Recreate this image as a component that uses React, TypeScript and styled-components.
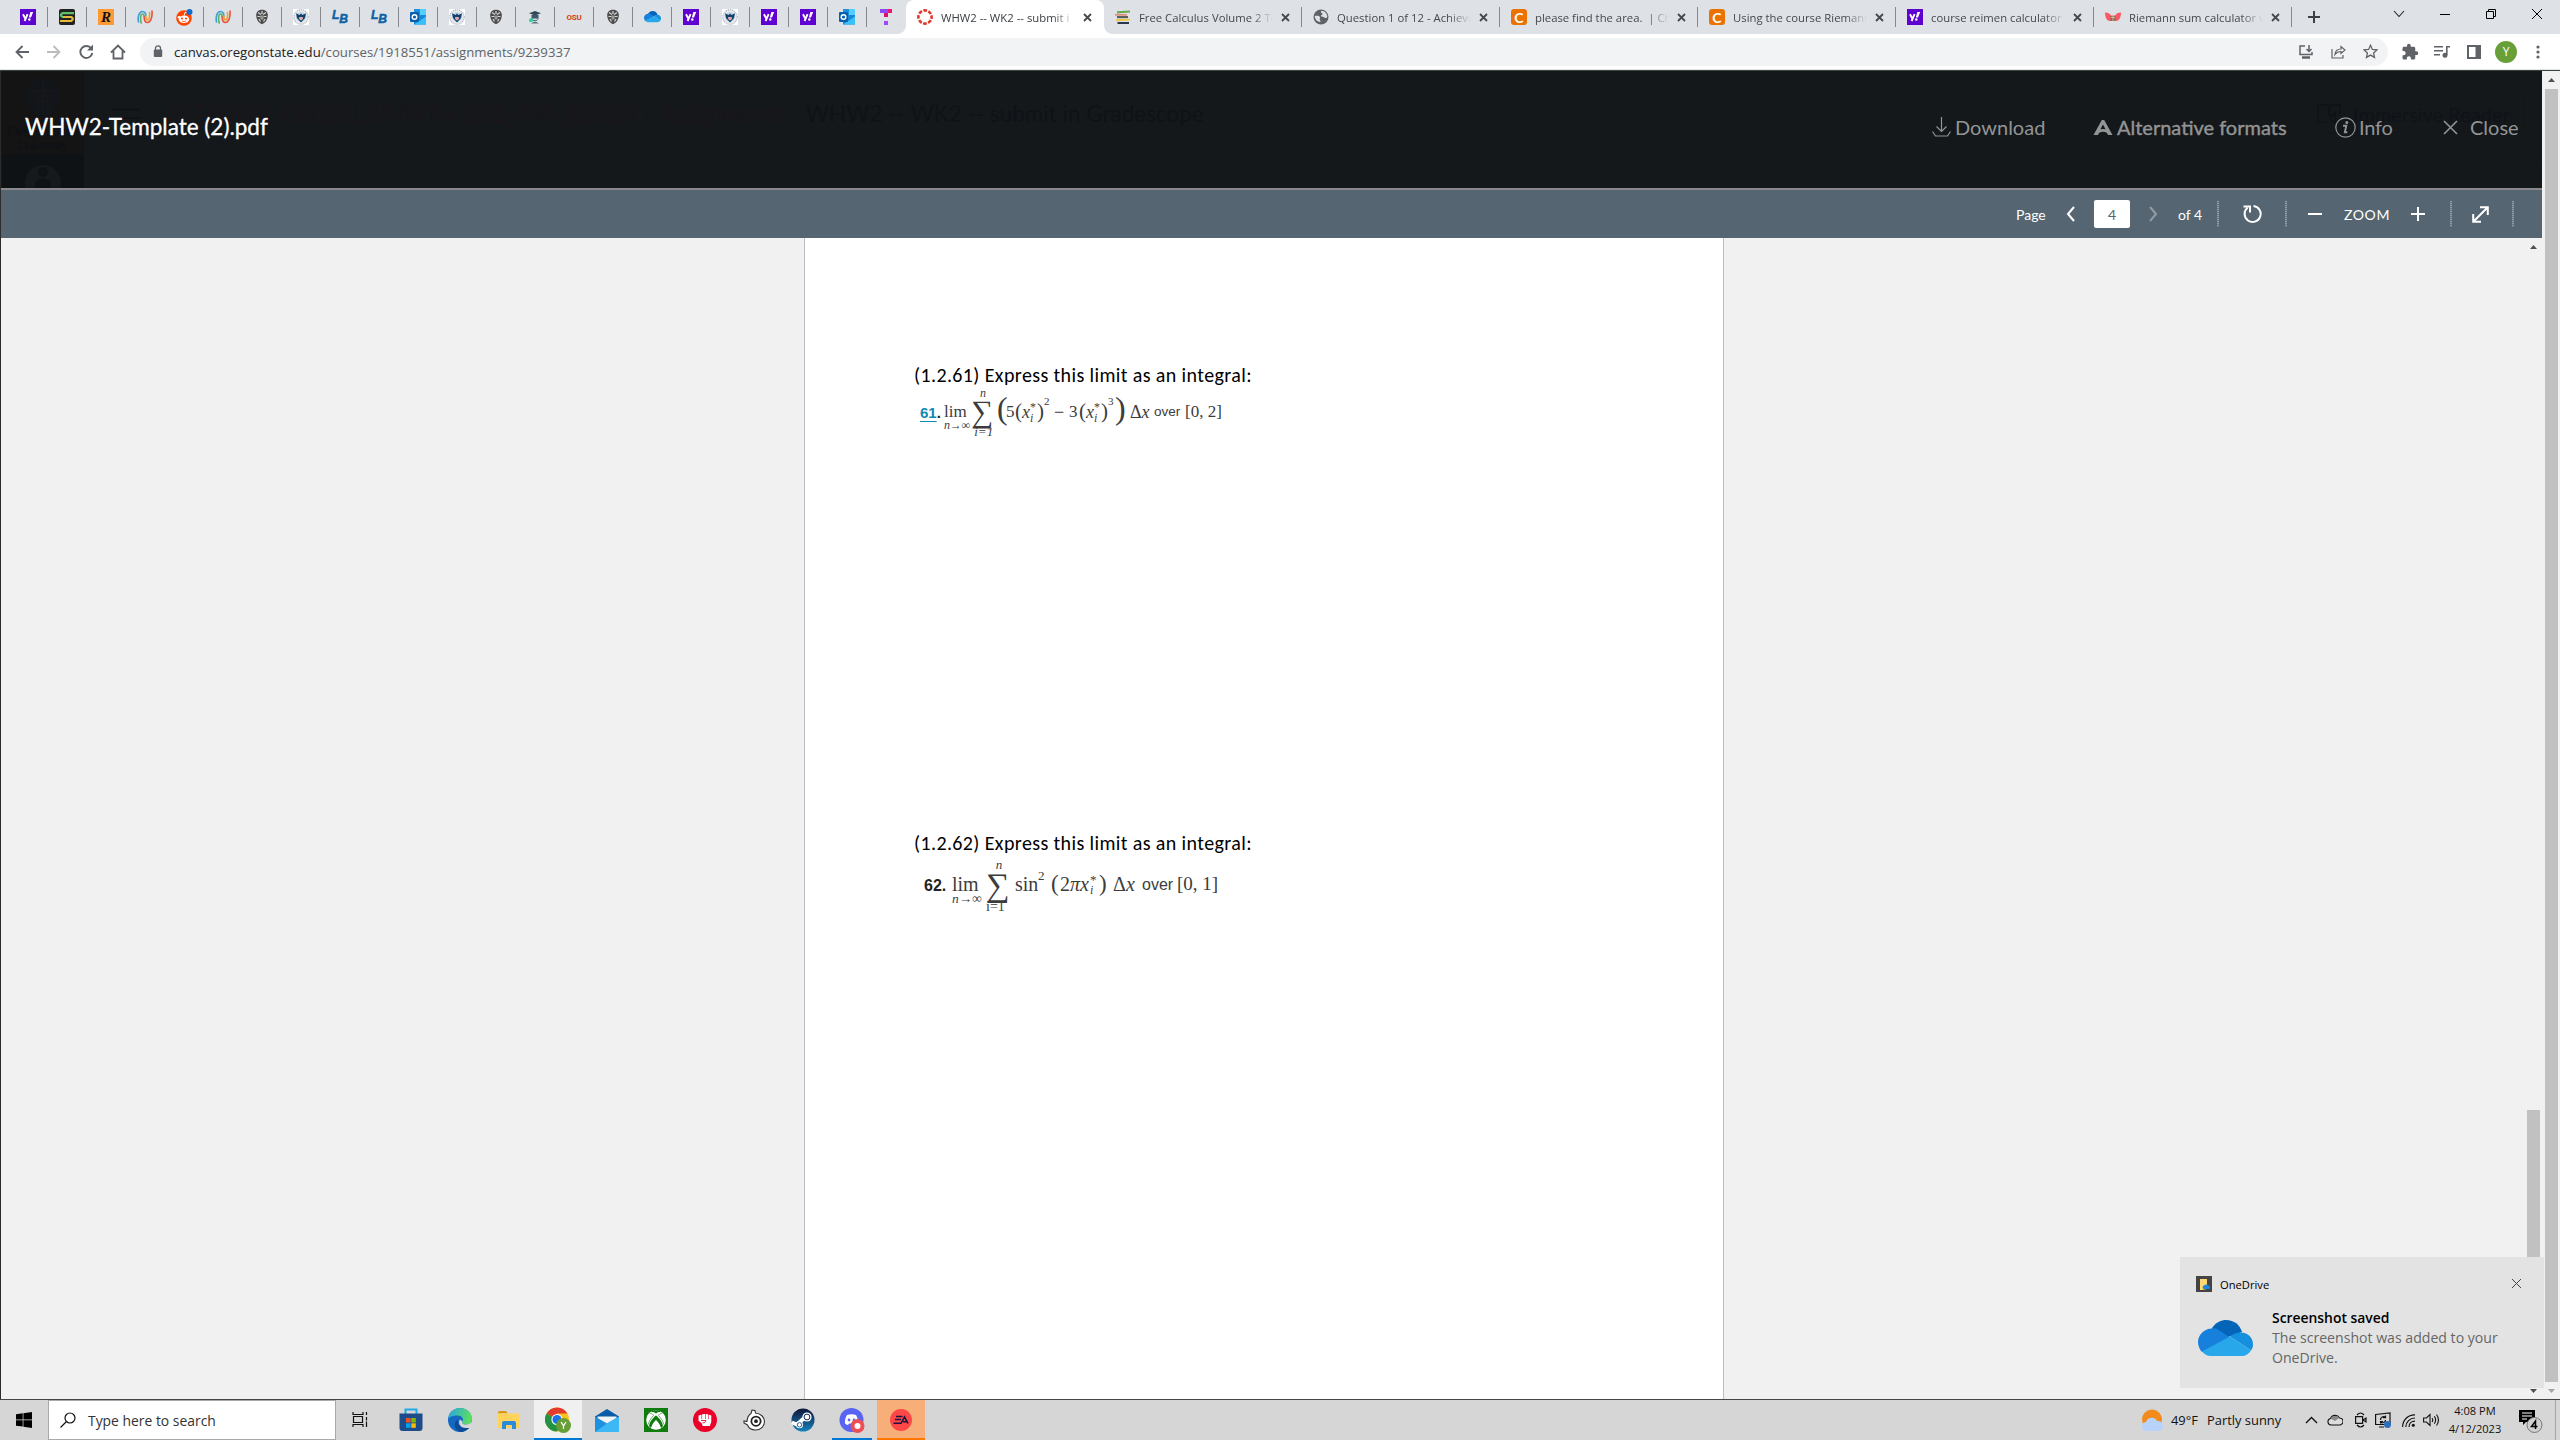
import React from "react";
import styled, { createGlobalStyle, css } from "styled-components";

const UI = `"Segoe UI", "Open Sans", "Noto Sans", sans-serif`;
const LATO = `Lato, "Open Sans", sans-serif`;
const SERIF = `"Liberation Serif", "Times New Roman", serif`;
const SANS = `"Liberation Sans", Arial, sans-serif`;

const Global = createGlobalStyle`
  * { box-sizing: border-box; }
  html, body { margin: 0; padding: 0; overflow: hidden; }
  svg { display: block; flex: none; }
`;

const Screen = styled.div`
  width: 2560px;
  height: 1440px;
  display: flex;
  flex-direction: column;
  background: #f1f1f1;
  font-family: ${UI};
  overflow: hidden;
  position: relative;
`;

const T = styled.span<{ $ls?: number }>`
  white-space: pre;
  letter-spacing: ${(p) => p.$ls ?? 0}px;
  font-variant-ligatures: ${(p) => (p.$ls ? "none" : "normal")};
`;

/* ---------- tab strip ---------- */
const TabStrip = styled.div`
  height: 34px;
  flex: none;
  display: flex;
  background: #dee1e6;
  padding-left: 9px;
`;
const Pinned = styled.div<{ $last?: boolean }>`
  width: 39px;
  height: 20px;
  margin-top: 7px;
  display: flex;
  align-items: center;
  justify-content: center;
  border-right: 1px solid ${(p) => (p.$last ? "transparent" : "#85888d")};
`;
const Tab = styled.div<{ $active?: boolean; $sep?: boolean }>`
  width: 198px;
  height: 34px;
  display: flex;
  align-items: center;
  padding-left: 11px;
  font-size: 11.3px;
  color: #45494d;
  position: relative;
  ${(p) =>
    p.$active &&
    css`
      background: #fff;
      border-radius: 8px 8px 0 0;
      color: #3c4043;
      &::before,
      &::after {
        content: "";
        position: absolute;
        bottom: 0;
        width: 8px;
        height: 8px;
      }
      &::before {
        left: -8px;
        background: radial-gradient(circle at 0 0, transparent 7.5px, #fff 8px);
      }
      &::after {
        right: -8px;
        background: radial-gradient(circle at 100% 0, transparent 7.5px, #fff 8px);
      }
    `}
  ${(p) =>
    p.$sep &&
    css`
      background: linear-gradient(#85888d, #85888d) right 7px / 1px 20px no-repeat;
    `}
`;
const TabTitle = styled.span`
  width: 134px;
  margin-left: 8px;
  overflow: hidden;
  mask-image: linear-gradient(90deg, #000 112px, transparent 134px);
`;
const TabClose = styled.span`
  margin-left: 8px;
`;
const Controls = styled.div`
  display: flex;
  flex: 1;
  justify-content: flex-end;
`;
const NewTab = styled.div`
  width: 43px;
  display: flex;
  align-items: center;
  justify-content: center;
`;
const WinBtn = styled.div`
  width: 46px;
  height: 28px;
  display: flex;
  align-items: center;
  justify-content: center;
`;

/* ---------- address bar ---------- */
const Toolbar = styled.div`
  height: 36px;
  flex: none;
  display: flex;
  align-items: center;
  background: #fff;
  padding: 0 6px;
  border-bottom: 1px solid #e4e6e4;
`;
const Slot = styled.div`
  width: 32px;
  height: 32px;
  display: flex;
  align-items: center;
  justify-content: center;
`;
const Omnibox = styled.div`
  flex: 1;
  height: 28px;
  margin: 0 6px;
  border-radius: 14px;
  background: #f1f3f4;
  display: flex;
  align-items: center;
  padding: 0 2px 0 13px;
`;
const Url = styled.div`
  flex: 1;
  margin-left: 11px;
  font-size: 13.2px;
  color: #5f6368;
  b {
    font-weight: 400;
    color: #202124;
  }
`;
const Avatar = styled.div`
  width: 22px;
  height: 22px;
  border-radius: 50%;
  background: #689f38;
  color: #fff;
  font-size: 12px;
  display: flex;
  align-items: center;
  justify-content: center;
`;

/* ---------- web page ---------- */
const WebView = styled.div`
  flex: 1;
  min-height: 0;
  display: flex;
  border-bottom: 1px solid #454545;
  border-top: 1px solid #3c4240;
`;
const Viewer = styled.div`
  flex: 1;
  min-width: 0;
  display: flex;
  flex-direction: column;
  border-left: 1px solid #2b2b2b;
`;
const PreviewHeader = styled.div`
  height: 117px;
  flex: none;
  position: relative;
  display: flex;
  align-items: center;
  justify-content: space-between;
  padding: 0 0 0 24px;
  background: #14181b;
  font-family: ${LATO};
  overflow: hidden;
`;
const Underlay = styled.div`
  position: absolute;
  inset: 0;
  display: flex;
  color: #191518;
`;
const GlobalNav = styled.div`
  width: 83px;
  height: 117px;
  background: linear-gradient(#151415 83px, #0f1215 83px);
  border-left: 1px solid #2a1208;
  overflow: hidden;
`;
const Breadcrumbs = styled.div`
  flex: 1;
  height: 91px;
  margin-left: 27px;
  display: flex;
  align-items: center;
  font-size: 22.5px;
  padding-bottom: 5px;
  border-bottom: 1px solid #161a1d;
`;
const Crumb = styled(T)<{ $ml: number; $current?: boolean }>`
  margin-left: ${(p) => p.$ml}px;
  color: ${(p) => (p.$current ? "#0f1216" : "inherit")};
`;
const Immersive = styled.div`
  width: 222px;
  height: 38px;
  margin: 0 18px 0 auto;
  border: 1px solid #12161a;
  display: flex;
  align-items: center;
  gap: 12px;
  padding-left: 14px;
  font-size: 20px;
  color: #0f1318;
`;
const DocTitle = styled.div`
  position: relative;
  font-size: 22.5px;
  color: #fff;
  -webkit-text-stroke: 0.3px #fff;
  margin-top: -7px;
`;
const Actions = styled.div`
  position: relative;
  display: flex;
  margin-top: -5px;
`;
const Action = styled.div<{ $w: number; $gap: number; $bold?: boolean }>`
  width: ${(p) => p.$w}px;
  display: flex;
  align-items: center;
  gap: ${(p) => p.$gap}px;
  font-size: 20px;
  color: #929495;
  -webkit-text-stroke: ${(p) => (p.$bold ? 0.4 : 0)}px #929495;
`;

const DocBar = styled.div`
  height: 50px;
  flex: none;
  display: flex;
  align-items: center;
  justify-content: flex-end;
  padding: 0 28px 0 0;
  background: #556572;
  border-top: 2px solid #8b898b;
  font-family: ${LATO};
  font-size: 14px;
  color: #fff;
`;
const Cell = styled.div<{ $w: number; $left?: number }>`
  width: ${(p) => p.$w}px;
  display: flex;
  align-items: center;
  justify-content: ${(p) => (p.$left !== undefined ? "flex-start" : "center")};
  padding-left: ${(p) => p.$left ?? 0}px;
`;
const Dots = styled.div`
  width: 2px;
  height: 26px;
  background: repeating-linear-gradient(#8f9aa3 0 1px, #6b7984 1px 2px);
`;
const PageInput = styled.div`
  width: 36px;
  height: 28px;
  border-radius: 2px;
  background: #fff;
  color: #556572;
  display: flex;
  align-items: center;
  justify-content: center;
`;

const DocArea = styled.div`
  flex: 1;
  min-height: 0;
  display: flex;
  background: #f1f1f1;
`;
const Paper = styled.div`
  width: 920px;
  margin-left: 803px;
  background: #fff;
  border: solid #b9bfc4;
  border-width: 0 1px;
  display: flex;
  flex-direction: column;
  padding: 120px 0 0 109px;
`;
const Question = styled.div<{ $h: number }>`
  height: ${(p) => p.$h}px;
  flex: none;
  display: flex;
  flex-direction: column;
`;
const Prompt = styled.div`
  font-family: Carlito, ${LATO};
  font-size: 20px;
  line-height: 34px;
  height: 34px;
  color: #000;
`;
const Formula = styled.div<{ $ml: number }>`
  display: flex;
  align-items: flex-start;
  margin-left: ${(p) => p.$ml}px;
  font-family: ${SERIF};
  color: #3c3c3c;
`;
const Tok = styled.span<{ $w: number; $top: number; $s: number; $i?: boolean; $ls?: number; $lh?: number }>`
  flex: none;
  width: ${(p) => p.$w}px;
  margin-top: ${(p) => p.$top}px;
  font-size: ${(p) => p.$s}px;
  line-height: ${(p) => p.$lh ?? p.$s}px;
  white-space: pre;
  font-style: ${(p) => (p.$i ? "italic" : "normal")};
  letter-spacing: ${(p) => p.$ls ?? 0}px;
`;
const Num = styled(Tok)`
  font-family: ${SANS};
  color: #222;
  font-weight: 700;
  u {
    color: #0f8ab4;
    text-underline-offset: 3px;
  }
`;
const Word = styled(Tok)`
  font-family: ${SANS};
`;
const Stack = styled.span<{ $w: number; $top: number }>`
  flex: none;
  width: ${(p) => p.$w}px;
  margin-top: ${(p) => p.$top}px;
  display: flex;
  flex-direction: column;
`;

/* ---------- scrollbars ---------- */
const Scroll = styled.div<{ $w: number }>`
  width: ${(p) => p.$w}px;
  flex: none;
  margin-left: auto;
  display: flex;
  flex-direction: column;
  align-items: center;
  background: #f1f1f1;
`;
const Arrow = styled.div<{ $h: number }>`
  height: ${(p) => p.$h}px;
  display: flex;
  align-items: center;
`;
const Thumb = styled.div<{ $mt?: number }>`
  width: 13px;
  flex: 1;
  margin-top: ${(p) => p.$mt ?? 0}px;
  background: #c1c1c1;
`;

/* ---------- toast ---------- */
const Toast = styled.div`
  position: absolute;
  left: 2180px;
  top: 1257px;
  width: 364px;
  height: 131px;
  background: #e3e3e3;
  padding: 19px 16px 0;
`;
const ToastHead = styled.div`
  display: flex;
  align-items: center;
  height: 16px;
  gap: 8px;
  font-size: 11.2px;
  color: #000;
  svg:last-child {
    margin: -2px 7px 0 auto;
  }
`;
const ToastBody = styled.div`
  display: flex;
  padding: 16px 0 0 2px;
  gap: 19px;
`;
const ToastArt = styled.div`
  padding-top: 12px;
`;
const ToastText = styled.div`
  display: flex;
  flex-direction: column;
  font-size: 14.1px;
  line-height: 20px;
  color: #666;
  strong {
    color: #000;
    font-weight: 600;
    font-size: 13.9px;
  }
`;

/* ---------- taskbar ---------- */
const Taskbar = styled.div`
  height: 40px;
  flex: none;
  display: flex;
  background: #d6d6d6;
  color: #111;
`;
const Start = styled.div`
  width: 48px;
  display: flex;
  align-items: center;
  justify-content: center;
`;
const Search = styled.div`
  width: 288px;
  background: #fff;
  border: 1px solid #a9a9a9;
  display: flex;
  align-items: center;
  padding: 0 0 0 11px;
  gap: 11px;
  font-size: 13.9px;
  color: #333;
`;
const TaskView = styled.div`
  width: 51px;
  display: flex;
  align-items: center;
  padding: 0 0 2px 16px;
`;
const Tile = styled.div<{ $bg?: string; $line?: string; $lineW?: number }>`
  width: 48px;
  margin-right: 1px;
  display: flex;
  align-items: center;
  justify-content: center;
  background: ${(p) =>
    p.$line
      ? `linear-gradient(${p.$line}, ${p.$line}) center bottom / ${p.$lineW ?? 48}px 2px no-repeat ${p.$bg ?? "transparent"}`
      : p.$bg ?? "transparent"};
`;
const Tray = styled.div`
  margin-left: auto;
  display: flex;
  align-items: center;
  font-size: 12.9px;
`;
const TrayCell = styled.div<{ $w: number; $left?: number }>`
  width: ${(p) => p.$w}px;
  padding-left: ${(p) => p.$left ?? 0}px;
  display: flex;
  align-items: center;
`;
const Clock = styled.div`
  width: 72px;
  display: flex;
  flex-direction: column;
  align-items: center;
  font-size: 11.1px;
  line-height: 18px;
  margin-left: -10px;
`;
const ShowDesktop = styled.div`
  width: 5px;
  height: 40px;
  border-left: 1px solid #a5a5a5;
`;

/* ---------- favicons ---------- */
const Yahoo = () => (
  <svg width="16" height="16" viewBox="0 0 16 16">
    <rect width="16" height="16" fill="#5f01d1" />
    <path d="M3 5.2l2.4 4.6M7.6 5.2L4.6 12" stroke="#fff" strokeWidth="1.9" fill="none" />
    <path d="M10.4 3h2.8l-2.2 5.6H8.8z" fill="#fff" />
    <circle cx="9.3" cy="10.5" r="1.25" fill="#fff" />
  </svg>
);
const SIcon = () => (
  <svg width="16" height="16" viewBox="0 0 16 16">
    <rect width="16" height="16" rx="2" fill="#222" />
    <path d="M15 4.2H3.5L2 5.5v1.2L3.5 8H12" stroke="#5cc36a" strokeWidth="2.2" fill="none" />
    <path d="M4 8h8.5L13.6 9.2v1.4L12.2 12H1" stroke="#e5b93a" strokeWidth="2.2" fill="none" />
  </svg>
);
const Letter = styled.span<{ $c: string; $bg?: string; $s: number; $f?: string; $i?: boolean; $r?: number; $ls?: number }>`
  width: 16px;
  height: 16px;
  flex: none;
  display: flex;
  align-items: center;
  justify-content: center;
  color: ${(p) => p.$c};
  background: ${(p) => p.$bg ?? "transparent"};
  font: ${(p) => (p.$i ? "italic" : "normal")} 700 ${(p) => p.$s}px ${(p) => p.$f ?? SANS};
  border-radius: ${(p) => p.$r ?? 0}px;
  letter-spacing: ${(p) => p.$ls ?? 0}px;
`;
const Swirl = () => (
  <svg width="16" height="16" viewBox="0 0 16 16" fill="none" strokeWidth="1.6" strokeLinecap="round">
    <path d="M1.500 13C.5 8 2 2.500 5.500 2.500 8 2.500 9 5 8.800 7" stroke="#3f9fd8" />
    <path d="M4.200 14C3 9.500 3.500 5 5.500 5c1.300 0 1.700 1.500 1.700 3" stroke="#58b368" />
    <path d="M7.200 8c0 3 1 5.500 3.300 5.500 3.500 0 5-6 4.500-11.500" stroke="#e8533f" />
    <path d="M8.800 7c0 2.500.7 4 1.900 4 1.500 0 2.300-4 1.800-7.500" stroke="#f0a030" />
  </svg>
);
const Reddit = () => (
  <svg width="17" height="17" viewBox="0 0 17 17">
    <circle cx="8" cy="9" r="7.8" fill="#ff4500" />
    <ellipse cx="8" cy="10.2" rx="5.2" ry="3.8" fill="#fff" />
    <circle cx="3" cy="8.200" r="1.300" fill="#fff" />
    <circle cx="6" cy="9.5" r="1.1" fill="#ff4500" />
    <circle cx="10" cy="9.500" r="1.1" fill="#ff4500" />
    <path d="M6 12q2 1.200 4 0" stroke="#ff4500" fill="none" strokeWidth=".8" />
    <path d="M8.200 6.500l.8-3.200 2.200.5" stroke="#fff" fill="none" strokeWidth=".9" />
    <circle cx="13.500" cy="3" r="3" fill="#0a6fd0" />
  </svg>
);
const Shield = () => (
  <svg width="16" height="16" viewBox="0 0 16 16">
    <path d="M8 .8c3 0 5.800 1.800 5.800 5.200 0 4-2 8-5.800 9.200C4.200 14 2.200 10 2.200 6 2.200 2.600 5 .8 8 .8z" fill="#4c4c4c" />
    <path d="M4 3.500l3 2M12 3.500l-3 2M3.500 7.500h3M9.500 7.500h3M5 10l1.500 2.500M11 10l-1.500 2.500M8 2v3" stroke="#d5d5d5" strokeWidth="1.200" />
    <path d="M6.500 6.500h3v4h-3z" fill="#999" />
  </svg>
);
const Seal = () => (
  <svg width="16" height="16" viewBox="0 0 16 16">
    <rect width="16" height="16" fill="#fff" />
    <circle cx="8" cy="8" r="7.200" fill="#e9ecef" stroke="#a9b0b8" strokeWidth="1.100" strokeDasharray="1.300 .8" />
    <circle cx="8" cy="8" r="5" fill="#c3d3df" />
    <path d="M3 4.200L6.500 6 8 4.500 9.500 6 13 4.200 12 9 8 13.500 4 9z" fill="#12426f" />
    <path d="M6.300 8h3.400v2L8 11.500 6.300 10z" fill="#fff" />
    <path d="M7 8v2.500M8 8v3M9 8v2.500" stroke="#c33" strokeWidth=".5" />
  </svg>
);
const OutlookIcon = () => (
  <svg width="16" height="16" viewBox="0 0 16 16">
    <rect x="4" y="0" width="12" height="12" fill="#1f8fe0" />
    <rect x="10" y="0" width="6" height="6" fill="#50d0ff" />
    <path d="M4 7l12-1v9.500H4z" fill="#1a86d8" />
    <path d="M4 15.500L16 7.500v8z" fill="#36c2f8" />
    <rect x="0" y="3" width="9" height="10" rx="1" fill="#0a5eb0" />
    <circle cx="4.500" cy="8" r="2.300" fill="none" stroke="#fff" strokeWidth="1.400" />
  </svg>
);
const Grad = () => (
  <svg width="16" height="16" viewBox="0 0 16 16">
    <path d="M8 2l6 2.200-6 2.300-6-2.300z" fill="#2f4858" />
    <path d="M4.500 6h7v3.500q-3.500 2-7 0z" fill="#3f5868" />
    <path d="M5 9.500c0 3 6 3 6 0" fill="#cbd5da" stroke="#506470" />
    <path d="M4 14.500q4-3.500 8 0z" fill="#5a6f7c" />
    <circle cx="4" cy="11.200" r="2" fill="#2fd1a0" />
  </svg>
);
const Cloud = ({ w }: { w: number }) => (
  <svg width={w} height={w * 0.66} viewBox="0 0 55 36.300">
    <path d="M13 10C17 2 24 0 28 0c8 0 14 5 16 12L30 17z" fill="#0364b8" />
    <path d="M14 8.500C6 8.500 0 15 0 22c0 4 2 8 4 10l29-14-14-9c-2-.6-3-.8-5-.5z" fill="#1780dc" />
    <path d="M43 12.500c-4-.3-7 1-11 4l21 14c1.500-2 2-4 2-6 0-7-5-12-12-12z" fill="#1490df" />
    <path d="M4 31.500L32 16.500l21 14c-2 3.500-5.500 5.500-9 5.500H13c-4 0-7-2-9-4.500z" fill="#28a8ea" />
  </svg>
);
const TIcon = () => (
  <svg width="12" height="16" viewBox="0 0 12 16">
    <path d="M0 0h12v4H8v4H4V4H0z" fill="#8a4af3" />
    <path d="M4 4h4v4H4z" fill="#e0106a" />
    <path d="M8 0h4v4H8z" fill="#f0146e" />
    <rect x="4" y="12" width="4" height="4" fill="#9a4bff" />
  </svg>
);
const CanvasIcon = () => (
  <svg width="16" height="16" viewBox="0 0 16 16">
    <circle cx="8" cy="8" r="6.600" fill="none" stroke="#e0392b" strokeWidth="2.600" strokeDasharray="3.700 1.480" strokeDashoffset="1.850" />
  </svg>
);
const Books = () => (
  <svg width="16" height="16" viewBox="0 0 16 16">
    <path d="M2 2.200l13-.8v2.200l-13 .8z" fill="#6aa84f" />
    <path d="M0 5.300h12v1.200H0z" fill="#e06a4a" />
    <path d="M2 7h11v2.200H2z" fill="#5c5f5a" />
    <path d="M1 10.200l14-.7v2l-14 .7z" fill="#ecc64d" />
    <path d="M2.500 13H14v2H2.500z" fill="#2c3550" />
  </svg>
);
const Globe = () => (
  <svg width="16" height="16" viewBox="0 0 16 16">
    <circle cx="8" cy="8" r="7.500" fill="#5f6368" />
    <path d="M.8 8.200c3-.4 5.200 0 6 1.300.6 1.200-.6 1.500-.3 2.700.3 1 1 .9.800 2.800-3.500 0-6.300-3-6.500-6.800z" fill="#dee1e6" transform="translate(1 -.3) scale(.88)" />
    <path d="M8.500 1.800c-.8.9-.8 1.900.3 2.300 1.300.4 1 1.500-.2 2-1.300.6-.5 1.700.9 1.600 1.500-.1 1.600 1.300 3.300 1.200.9 0 1.500-.6 1.500-1.500C14 4.500 11.500 2 8.500 1.800z" fill="#dee1e6" />
  </svg>
);
const Wings = () => (
  <svg width="16" height="16" viewBox="0 0 16 16">
    <path d="M0 3.500c3 0 5 1 6 3h4c1-2 3-3 6-3 0 5-2 8.500-5 8.500H5C2 12 0 8.500 0 3.500z" fill="#fb5a64" />
    <path d="M5.500 7h5v5h-5z" fill="#8b6a5c" />
    <path d="M6 8.500h4M8 7v5" stroke="#d8c9a0" strokeWidth=".8" />
  </svg>
);
const MonoBox = styled.span`
  display: flex;
  color: #0d62a3;
  font: italic 700 12px/12px ${SANS};
  -webkit-text-stroke: 0.5px #0d62a3;
  span + span {
    margin-top: 4px;
  }
`;
const LB = () => (
  <MonoBox>
    <span>L</span>
    <span>B</span>
  </MonoBox>
);
const RIcon = () => <Letter $c="#111" $bg="#ff9a33" $s={15} $f={SERIF} $i>R</Letter>;
const Osu = () => <Letter $c="#d73f09" $s={8} $f={`Roboto, ${SANS}`} $ls={-0.2}>OSU</Letter>;
const Chegg = () => <Letter $c="#fff" $bg="#eb7100" $s={14} $f={LATO} $r={3}>C</Letter>;

const pinned = [
  Yahoo, SIcon, RIcon, Swirl, Reddit, Swirl, Shield, Seal, LB, LB, OutlookIcon, Seal, Shield, Grad, Osu, Shield,
  () => <Cloud w={17} />, Yahoo, Seal, Yahoo, Yahoo, OutlookIcon, TIcon,
];
const tabs = [
  { icon: CanvasIcon, title: "WHW2 -- WK2 -- submit i", active: true },
  { icon: Books, title: "Free Calculus Volume 2 Te" },
  { icon: Globe, title: "Question 1 of 12 - Achieve" },
  { icon: Chegg, title: "please find the area.  | Che" },
  { icon: Chegg, title: "Using the course Riemann" },
  { icon: Yahoo, title: "course reimen calculator - " },
  { icon: Wings, title: "Riemann sum calculator w" },
];

const line = (d: string, w: number, h: number, sw: number, c: string) => (
  <svg width={w} height={h} viewBox={`0 0 ${w} ${h}`} fill="none" stroke={c} strokeWidth={sw}>
    <path d={d} />
  </svg>
);
const G = "#5f6368";

const Tri = ({ down, c }: { down?: boolean; c: string }) => (
  <svg width="7" height="4" viewBox="0 0 7 4">
    <path d={down ? "M0 0h7L3.500 4z" : "M0 4h7L3.500 0z"} fill={c} />
  </svg>
);

const XStar = () => (
  <>
    <Tok $w={8} $top={11} $s={18} $i>x</Tok>
    <Stack $w={7} $top={10}>
      <Tok $w={7} $top={0} $s={12} $lh={11}>*</Tok>
      <Tok $w={7} $top={-1} $s={12} $i>i</Tok>
    </Stack>
  </>
);

export default function App() {
  return (
    <Screen>
      <Global />
      <TabStrip>
        {pinned.map((I, i) => (
          <Pinned key={i} $last={i === pinned.length - 1}>
            <I />
          </Pinned>
        ))}
        {tabs.map((t, i) => (
          <Tab key={i} $active={t.active} $sep={!t.active}>
            <t.icon />
            <TabTitle>
              <T $ls={0.01}>{t.title}</T>
            </TabTitle>
            <TabClose>{line("M1 1l7 7M8 1l-7 7", 9, 9, 1.8, "#45494d")}</TabClose>
          </Tab>
        ))}
        <NewTab>{line("M6 0v12M0 6h12", 12, 12, 2, "#3c4043")}</NewTab>
        <Controls>
          <WinBtn>{line("M1 1l5 5.500L11 1", 12, 8, 1.1, "#222")}</WinBtn>
          <WinBtn>{line("M0 .5h10", 10, 1, 1, "#000")}</WinBtn>
          <WinBtn>{line("M.5 2.500h7v7h-7zM2.500 2.500v-2h7v7h-2", 10, 10, 1, "#000")}</WinBtn>
          <WinBtn>{line("M0 0l10 10M10 0L0 10", 10, 10, 1, "#000")}</WinBtn>
        </Controls>
      </TabStrip>

      <Toolbar>
        <Slot>{line("M14 7H1.500M7.500 1L1.500 7l6 6", 15, 14, 1.8, G)}</Slot>
        <Slot>{line("M0 7h12.500M6.500 1l6 6-6 6", 14, 14, 1.8, "#babcbe")}</Slot>
        <Slot>
          <svg width="15" height="15" viewBox="0 0 15 15">
            <path d="M12.300 4.500A6 6 0 1 0 13.300 9" fill="none" stroke={G} strokeWidth="1.900" />
            <path d="M14 .5v6H8z" fill={G} />
          </svg>
        </Slot>
        <Slot>{line("M3.500 7v7.500h9V7M1 8.500L8 1.500l7 7M3 8.500h1M12 8.500h1", 16, 16, 1.8, G)}</Slot>
        <Omnibox>
          <svg width="10" height="13" viewBox="0 0 10 13">
            <path d="M2.500 5V3.200a2.500 2.300 0 0 1 5 0V5" fill="none" stroke={G} strokeWidth="1.300" />
            <rect x=".8" y="4.600" width="8.400" height="7.400" rx="1" fill={G} />
          </svg>
          <Url>
            <T>
              <b>canvas.oregonstate.edu</b>/courses/1918551/assignments/9239337
            </T>
          </Url>
          <Slot>
            <svg width="14" height="14" viewBox="0 0 14 14" fill="none" stroke={G} strokeWidth="1.500">
              <path d="M6 1H1v8.500h12V7M10 0v6M7.500 4L10 6.500 12.500 4" />
              <path d="M3 12.500h8" strokeWidth="2.500" />
            </svg>
          </Slot>
          <Slot>
            <svg width="15" height="14" viewBox="0 0 15 14" fill="none" stroke={G} strokeWidth="1.200">
              <path d="M1 4v9h11v-3M4 9.500c.3-4 2.500-5.500 6-5.500V1.500L14 5l-4 3.500V6.500c-3 0-4.500.8-6 3z" />
            </svg>
          </Slot>
          <Slot>{line("M7.500 1.300l1.900 4.100 4.500.5-3.300 3 .9 4.500-4-2.300-4 2.300.9-4.500-3.300-3 4.500-.5z", 15, 15, 1.3, G)}</Slot>
        </Omnibox>
        <Slot>
          <svg width="18" height="18" viewBox="0 0 24 24" fill={G}>
            <path d="M20.500 11H19V7c0-1.100-.9-2-2-2h-4V3.500a2.500 2.500 0 0 0-5 0V5H4c-1.100 0-1.990.9-1.990 2v3.800H3.500c1.490 0 2.700 1.210 2.700 2.700s-1.210 2.700-2.700 2.700H2V20c0 1.100.9 2 2 2h3.800v-1.500c0-1.490 1.210-2.700 2.700-2.700s2.700 1.210 2.700 2.700V22H17c1.100 0 2-.9 2-2v-4h1.500a2.500 2.500 0 0 0 0-5z" />
          </svg>
        </Slot>
        <Slot>
          <svg width="16" height="13" viewBox="0 0 16 13" fill="none" stroke={G} strokeWidth="1.600">
            <path d="M0 1.800h9M0 5.800h9M0 9.800h6M12.800 10V1.800H16" />
            <circle cx="11" cy="10.200" r="1.700" fill={G} />
          </svg>
        </Slot>
        <Slot>
          <svg width="14" height="14" viewBox="0 0 14 14">
            <path d="M1 1h12v12H1z" fill="none" stroke={G} strokeWidth="2" />
            <path d="M8.500 1H13v12H8.500z" fill={G} />
          </svg>
        </Slot>
        <Slot>
          <Avatar>Y</Avatar>
        </Slot>
        <Slot>
          <svg width="4" height="14" viewBox="0 0 4 14" fill={G}>
            <circle cx="2" cy="2" r="1.600" />
            <circle cx="2" cy="7" r="1.600" />
            <circle cx="2" cy="12" r="1.600" />
          </svg>
        </Slot>
      </Toolbar>

      <WebView>
        <Viewer>
          <PreviewHeader>
            <Underlay>
              <GlobalNav>
                <svg width="82" height="117" viewBox="0 0 82 117" fill="#12161a">
                  <ellipse cx="41" cy="26" rx="17" ry="19" />
                  <path d="M30 20h22M33 30h16M41 10v32M36 30v14M46 30v14" stroke="#171618" strokeWidth="2" />
                  <g fontFamily="Liberation Serif" fontSize="15" fontWeight="700" fill="#0f1114">
                    <text x="5" y="65" textLength="72">Oregon State</text>
                    <text x="14" y="79" textLength="52">University</text>
                  </g>
                  <circle cx="41" cy="112" r="18" fill="#15191c" />
                  <circle cx="41" cy="101" r="5" fill="#0f1215" />
                  <path d="M33 117v-6q8-7 16 0v6z" fill="#0f1215" />
                </svg>
              </GlobalNav>
              <Breadcrumbs>
                {line("M0 1.500h29M0 10h29", 29, 12, 2, "#0f1216")}
                <Crumb $ml={29}>INTEGRAL CALCULUS (MTH_252_030_S2023)</Crumb>
                <Crumb $ml={8}>›</Crumb>
                <Crumb $ml={8}>Assignments</Crumb>
                <Crumb $ml={8}>›</Crumb>
                <Crumb $ml={8} $current>WHW2 -- WK2 -- submit in Gradescope</Crumb>
                <Immersive>
                  <svg width="24" height="20" viewBox="0 0 24 20" fill="none" stroke="#0f1318" strokeWidth="2">
                    <path d="M1 1h9l2 2 2-2h9v9M12 3v9M1 1v17h9M14 12l4-3v10l-4-3z" />
                  </svg>
                  <T>Immersive Reader</T>
                </Immersive>
              </Breadcrumbs>
            </Underlay>
            <DocTitle>
              <T>WHW2-Template (2).pdf</T>
            </DocTitle>
            <Actions>
              <Action $w={161} $gap={4}>
                {line("M9.500 0v14M4.500 9.500l5 5 5-5M.5 14.500l3 4.500h12l3-4.500", 19, 20, 1.2, "#929495")}
                <T>Download</T>
              </Action>
              <Action $w={242} $gap={4} $bold>
                <svg width="20" height="16" viewBox="0 0 20 16">
                  <path d="M8.800 1h2.400L19.500 16H15q-1-3.300-5-3.300T5 16H.5zM10 5.500L7.500 10.300q2.500-.8 5 0z" fill="#929495" fillRule="evenodd" />
                </svg>
                <T>Alternative formats</T>
              </Action>
              <Action $w={108} $gap={3}>
                <svg width="21" height="21" viewBox="0 0 21 21">
                  <circle cx="10.500" cy="10.500" r="9.700" fill="none" stroke="#929495" strokeWidth="1.200" />
                  <path d="M8 8.700h3.300L9.800 15.300H12.300" fill="none" stroke="#929495" strokeWidth="1.900" />
                  <circle cx="11.800" cy="5.500" r="1.500" fill="#929495" />
                </svg>
                <T $ls={-0.2}>Info</T>
              </Action>
              <Action $w={99} $gap={12}>
                {line("M1 1l13 13M14 1L1 14", 15, 15, 1.6, "#929495")}
                <T>Close</T>
              </Action>
            </Actions>
          </PreviewHeader>
          <DocBar>
            <Cell $w={30} $left={0}>
              <T>Page</T>
            </Cell>
            <Cell $w={48}>{line("M8 1L2 8l6 7", 9, 16, 2, "#fff")}</Cell>
            <PageInput>4</PageInput>
            <Cell $w={46}>{line("M1 1l6 7-6 7", 9, 16, 2, "#929ca4")}</Cell>
            <Cell $w={41} $left={2}>
              <T>of 4</T>
            </Cell>
            <Dots />
            <Cell $w={66}>
              <svg width="19" height="20" viewBox="0 0 19 20" fill="none" stroke="#fff" strokeWidth="2">
                <path d="M4.500 3.800A8 8 0 1 0 10.500 2M.5 2.500h6.500v6" />
              </svg>
            </Cell>
            <Dots />
            <Cell $w={56}>{line("M0 1h14", 14, 2, 2, "#fff")}</Cell>
            <Cell $w={48} $left={1}>
              <T $ls={0.6}>ZOOM</T>
            </Cell>
            <Cell $w={54}>{line("M7 0v14M0 7h14", 14, 14, 2, "#fff")}</Cell>
            <Cell $w={5} />
            <Dots />
            <Cell $w={56}>{line("M2 15L15 2M8 1.200h7.800V9M1.200 8v7.800H9", 17, 17, 2, "#fff")}</Cell>
            <Cell $w={4} />
            <Dots />
          </DocBar>
          <DocArea>
            <Paper>
              <Question $h={468}>
                <Prompt>
                  <T $ls={0.38}>(1.2.61) Express this limit as an integral:</T>
                </Prompt>
                <Formula $ml={6}>
                  <Num $w={24} $top={13} $s={15}>
                    <u>61</u>.
                  </Num>
                  <Stack $w={27} $top={11}>
                    <Tok $w={26} $top={0} $s={17}>{"lim"}</Tok>
                    <Tok $w={27} $top={-1} $s={12} $i $ls={-0.2}>n→∞</Tok>
                  </Stack>
                  <Stack $w={26} $top={-5}>
                    <Tok $w={20} $top={0} $s={12} $i>{"   n"}</Tok>
                    <Tok $w={22} $top={0} $s={31} $lh={26}>∑</Tok>
                    <Tok $w={20} $top={0} $s={13} $i>{" i=1"}</Tok>
                  </Stack>
                  <Tok $w={9} $top={0} $s={32}>(</Tok>
                  <Tok $w={9} $top={11} $s={17}>5</Tok>
                  <Tok $w={7} $top={9} $s={21}>(</Tok>
                  <XStar />
                  <Tok $w={7} $top={9} $s={21}>)</Tok>
                  <Tok $w={10} $top={4} $s={11}>2</Tok>
                  <Tok $w={15} $top={11} $s={18}>−</Tok>
                  <Tok $w={10} $top={11} $s={17}>3</Tok>
                  <Tok $w={7} $top={9} $s={21}>(</Tok>
                  <XStar />
                  <Tok $w={7} $top={9} $s={21}>)</Tok>
                  <Tok $w={7} $top={4} $s={11}>3</Tok>
                  <Tok $w={15} $top={0} $s={32}>)</Tok>
                  <Tok $w={24} $top={11} $s={18}>
                    Δ<i>x</i>
                  </Tok>
                  <Word $w={31} $top={13} $s={13.5}>over</Word>
                  <Tok $w={40} $top={11} $s={17}>[0, 2]</Tok>
                </Formula>
              </Question>
              <Question $h={120}>
                <Prompt>
                  <T $ls={0.38}>(1.2.62) Express this limit as an integral:</T>
                </Prompt>
                <Formula $ml={10}>
                  <Num $w={28} $top={18} $s={16}>62.</Num>
                  <Stack $w={34} $top={14}>
                    <Tok $w={30} $top={0} $s={20}>{"lim"}</Tok>
                    <Tok $w={32} $top={-2} $s={13.5} $i>n→∞</Tok>
                  </Stack>
                  <Stack $w={29} $top={-2}>
                    <Tok $w={20} $top={0} $s={13} $i>{"   n"}</Tok>
                    <Tok $w={22} $top={0} $s={33} $lh={28}>∑</Tok>
                    <Tok $w={20} $top={1} $s={14}>i=1</Tok>
                  </Stack>
                  <Tok $w={23} $top={14} $s={20}>sin</Tok>
                  <Tok $w={13} $top={9} $s={13}>2</Tok>
                  <Tok $w={9} $top={12} $s={23}>(</Tok>
                  <Tok $w={30} $top={14} $s={20}>
                    2<i>πx</i>
                  </Tok>
                  <Stack $w={9} $top={13}>
                    <Tok $w={7} $top={0} $s={13}>*</Tok>
                    <Tok $w={7} $top={-2} $s={12} $i>i</Tok>
                  </Stack>
                  <Tok $w={14} $top={12} $s={23}>)</Tok>
                  <Tok $w={29} $top={14} $s={20}>
                    Δ<i>x</i>
                  </Tok>
                  <Word $w={35} $top={17} $s={16}>over</Word>
                  <Tok $w={40} $top={14} $s={19}>[0, 1]</Tok>
                </Formula>
              </Question>
            </Paper>
            <Scroll $w={17}>
              <Arrow $h={17}>
                <Tri c="#505050" />
              </Arrow>
              <Thumb $mt={855} />
              <Arrow $h={17}>
                <Tri down c="#505050" />
              </Arrow>
            </Scroll>
          </DocArea>
        </Viewer>
        <Scroll $w={18}>
          <Arrow $h={18}>
            <Tri c="#505050" />
          </Arrow>
          <Thumb />
          <Arrow $h={17}>
            <Tri down c="#a3a3a3" />
          </Arrow>
        </Scroll>
      </WebView>

      <Taskbar>
        <Start>
          <svg width="16" height="16" viewBox="0 0 16 16">
            <path d="M0 2.200L6.700 1.300v6.300H0zM7.400 1.200L16 0v7.600H7.400zM0 8.300h6.700v6.300L0 13.700zM7.400 8.300H16V16l-8.600-1.200z" />
          </svg>
        </Start>
        <Search>
          {line("M15 6A5 5 0 1 1 5 6A5 5 0 1 1 15 6M6.500 9.500L.5 15.500", 17, 16, 1.2, "#111")}
          <T>Type here to search</T>
        </Search>
        <TaskView>{line("M1 0v2.500h10V0M1 15v-2.500h10V15M1.500 4.500h9v6h-9zM14.500 0v3M14.500 5v3.500M14.500 9.500V15", 16, 15, 1.2, "#111")}</TaskView>
        <Tile>
          <svg width="24" height="24" viewBox="0 0 24 24">
            <path d="M6.500 6V1.500h11V6" fill="none" stroke="#1fa9e8" strokeWidth="2" />
            <path d="M.5 5.500h23V20a3 3 0 0 1-3 3h-17a3 3 0 0 1-3-3z" fill="#1e4b8a" />
            <path d="M7 10h4.500v4.500H7z" fill="#f25022" />
            <path d="M12.300 10h4.500v4.500h-4.500z" fill="#7fba00" />
            <path d="M7 15.300h4.500v4.500H7z" fill="#00a4ef" />
            <path d="M12.300 15.300h4.500v4.500h-4.500z" fill="#ffb900" />
          </svg>
        </Tile>
        <Tile>
          <svg width="24" height="24" viewBox="0 0 24 24">
            <defs>
              <linearGradient id="edgeTop" x1="0" y1="0.3" x2="1" y2="0.5">
                <stop offset="0" stopColor="#2aa9e0" />
                <stop offset="1" stopColor="#5fe05a" />
              </linearGradient>
            </defs>
            <circle cx="12" cy="12" r="12" fill="#1468c0" />
            <path d="M0 11C1 4 6 0 12 0c7 0 12 5 12 10.500 0 4-3 6-6 6-3.500 0-4.500-1.500-3.500-3C16 11 14 7.500 9.500 7.500 5 7.500 1 9 0 11z" fill="url(#edgeTop)" />
            <path d="M10.500 11C8 15 12 20.500 20 19l2.500-.8C20 22 16 24 12.500 24 8 23 5.500 18 7.500 13.500z" fill="#0d4a9a" />
            <path d="M14.500 13.500c-1 1.500 0 3 3.500 3 2.500 0 5-1.200 5.800-3.500L24 20h-5c-7 .5-9.500-5-7-8.500z" fill="#d6d6d6" />
          </svg>
        </Tile>
        <Tile>
          <svg width="22" height="19" viewBox="0 0 22 19">
            <path d="M0 1.500A1.500 1.500 0 0 1 1.500 0H8l2 2.500H0z" fill="#d99a12" />
            <path d="M0 2.500h20.500a1 1 0 0 1 1 1V17H0z" fill="#ffd35c" />
            <path d="M4 18v-6a2 2 0 0 1 2-2h10a2 2 0 0 1 2 2v6h-4v-4H8v4z" fill="#2b8bd8" />
          </svg>
        </Tile>
        <Tile $bg="#f0f0f0" $line="#0078d7">
          <svg width="26" height="26" viewBox="1 0 26 26">
            <circle cx="13" cy="12.500" r="12" fill="#fbc116" />
            <path d="M13 12.500L2.600 6.500A12 12 0 0 1 23.400 6.500H13z" fill="#e33b2e" />
            <path d="M2.600 6.500A12 12 0 0 0 13 24.500l5-8.500-5-3.500z" fill="#229342" />
            <circle cx="13" cy="12.500" r="5.600" fill="#fff" />
            <circle cx="13" cy="12.500" r="4.500" fill="#1a73e8" />
            <circle cx="19.500" cy="18.500" r="7.500" fill="#689f38" />
            <path d="M17 15l2.500 3.800V22M22 15l-2.500 3.800" fill="none" stroke="#fff" strokeWidth="1.200" />
          </svg>
        </Tile>
        <Tile>
          <svg width="24" height="23" viewBox="0 0 24 23">
            <path d="M0 7.500L12 0l12 7.500v3H0z" fill="#0a5ba8" />
            <path d="M2.500 7.500h19v6L12 17l-9.500-4z" fill="#f2f4f6" />
            <path d="M0 7.500l12 7L24 7.500V23H0z" fill="#1e90e0" />
            <path d="M0 23l12-8.500L24 7.500V23z" fill="#3db8f5" />
          </svg>
        </Tile>
        <Tile>
          <svg width="24" height="24" viewBox="0 0 24 24">
            <rect width="24" height="24" fill="#107c10" />
            <circle cx="12" cy="12" r="9.800" fill="#fff" />
            <path d="M12 7.500c3 2 6.500 6.500 7 10.500-1.200 1.400-2 2-2 2C16 16.500 14 13.500 12 12c-2 1.500-4 4.500-5 8 0 0-.8-.6-2-2 .5-4 4-8.500 7-10.500zM6.500 4C8 3.500 10.500 4.500 12 5.500c1.500-1 4-2 5.500-1.500C15 1.600 9 1.600 6.500 4z" fill="#107c10" />
            <path d="M5.300 5.200C7 5 8.800 6.400 9.600 7.300 7.500 9.500 5 13 4.200 16.500M18.700 5.200C17 5 15.200 6.400 14.400 7.300c2.100 2.200 4.600 5.700 5.400 9.200" fill="none" stroke="#107c10" strokeWidth=".6" />
          </svg>
        </Tile>
        <Tile>
          <svg width="24" height="24" viewBox="0 0 24 24">
            <circle cx="12" cy="12" r="12" fill="#ea0029" />
            <path d="M5.500 7.500l3-.8v4.500h.6V6.300l2.900-.3v5h.6V6l2.600.3v4.900h.6V6.800l2.500.7V14l-1.500 4H9.500L9 15.500l-3.500-2.800z" fill="#fff" />
            <path d="M8 12.500h5l-1.500 2.300H9.500" fill="none" stroke="#ea0029" strokeWidth=".8" />
          </svg>
        </Tile>
        <Tile>
          <svg width="23" height="24" viewBox="0 0 23 24">
            <path d="M8 5.500L9 2l3 .5.500 2.500c5 .5 9 4 9 8.500 0 5-4 8.500-9 8.500-4.500 0-7-2.500-8-5L1 15v-2l3 .500C4.200 10 5.500 7 8 5.500z" fill="#fff" stroke="#333" strokeWidth="1.100" />
            <circle cx="13" cy="13.200" r="5.500" fill="#222" />
            <circle cx="13" cy="13.200" r="3.700" fill="#fff" />
            <circle cx="13" cy="13.200" r="1.900" fill="#222" />
          </svg>
        </Tile>
        <Tile>
          <svg width="24" height="24" viewBox="0 0 24 24">
            <defs>
              <linearGradient id="steam" x1="0" y1="0" x2="0" y2="1">
                <stop offset="0" stopColor="#10163a" />
                <stop offset="1" stopColor="#1783bd" />
              </linearGradient>
            </defs>
            <circle cx="12" cy="12" r="11.500" fill="url(#steam)" />
            <path d="M.8 14.500L6 16.500l9-8" stroke="#fff" strokeWidth="4" fill="none" />
            <circle cx="16" cy="9" r="4.600" fill="#fff" />
            <circle cx="16" cy="9" r="2.900" fill="#fff" stroke="#16245c" strokeWidth="1" />
            <circle cx="8.500" cy="16.800" r="3.500" fill="#fff" />
            <circle cx="8.500" cy="16.800" r="2.200" fill="none" stroke="#174f8a" strokeWidth=".9" />
          </svg>
        </Tile>
        <Tile $line="#0078d7" $lineW={40}>
          <svg width="26" height="25" viewBox="0 0 26 25">
            <circle cx="12.500" cy="12" r="12" fill="#5865f2" />
            <path d="M8 7c3-1 6-1 9 0 1.500 2.500 2.300 5.500 2 8.500-1 1-2 1.300-3 1.500l-1-1.500H10L9 17c-1.200-.2-2.200-.6-3-1.500C5.700 12.500 6.500 9.500 8 7z" fill="#fff" />
            <circle cx="10" cy="12" r="1.400" fill="#5865f2" />
            <circle cx="15" cy="12" r="1.400" fill="#5865f2" />
            <circle cx="18.500" cy="18" r="7" fill="#ed4f52" />
            <circle cx="18.500" cy="18" r="3" fill="#fff" />
          </svg>
        </Tile>
        <Tile $bg="#f7ae78" $line="#ff7600">
          <svg width="22" height="22" viewBox="0 0 22 22">
            <circle cx="11" cy="11" r="11" fill="#ff4747" />
            <path d="M6 7.500h6.500M5 10.500h6M3.500 14.300h7.500L14.500 8l3.500 6.300M13 12.800h4" fill="none" stroke="#1a1440" strokeWidth="1.600" />
          </svg>
        </Tile>

        <Tray>
          <TrayCell $w={30}>
            <svg width="23" height="23" viewBox="0 0 23 23">
              <circle cx="11" cy="10.500" r="10" fill="#f28b1c" />
              <path d="M5.500 22a4.500 4.500 0 0 1-.5-9 6 6 0 0 1 11-1 5 5 0 0 1 6 5c0 3-2 5-4.500 5z" fill="#b9d2fa" />
            </svg>
          </TrayCell>
          <TrayCell $w={36}>
            <T>49°F</T>
          </TrayCell>
          <TrayCell $w={98}>
            <T>Partly sunny</T>
          </TrayCell>
          <TrayCell $w={22}>{line("M1 7l5.500-5.500L12 7", 13, 8, 1.4, "#111")}</TrayCell>
          <TrayCell $w={28}>
            <svg width="16" height="12" viewBox="0 0 16 12">
              <path d="M4 11a3.300 3.300 0 0 1-.5-6.500A5 5 0 0 1 12.500 4a3.500 3.500 0 0 1 0 7z" fill="#ddd" stroke="#111" strokeWidth="1.100" />
              <path d="M3.500 4.500A5 5 0 0 1 12 4L8 7z" fill="#888" />
            </svg>
          </TrayCell>
          <TrayCell $w={20}>{line("M2 3Q5.500-1 9 3M2 13Q5.500 17 9 13M.6 4.600h7v6.800h-7zM8 8l3-2v4z", 12, 16, 1.2, "#111")}</TrayCell>
          <TrayCell $w={27}>
            <svg width="16" height="17" viewBox="0 0 16 17" fill="none" stroke="#111" strokeWidth="1.200">
              <path d="M.6 2.500L15 1v11.500H.6zM4 15h5M5.500 8A3 3 0 0 1 10.500 5.500M10.500 3.500v2.200H8M10.500 8A3 3 0 0 1 5.500 10M5.500 11.500V9.500H8" />
              <circle cx="12.500" cy="12.500" r="3.500" fill="#2a6fbe" stroke="none" />
            </svg>
          </TrayCell>
          <TrayCell $w={21}>
            <svg width="13" height="13" viewBox="0 0 13 13" fill="none" stroke="#111" strokeWidth="1.200">
              <path d="M.6 13C.6 6 6 .6 13 .8M3.800 13C3.800 8 8 4 13 4M7 13c0-3.500 2.500-5.800 6-5.800" />
              <circle cx="11.300" cy="11.300" r="1.500" fill="#111" stroke="none" />
            </svg>
          </TrayCell>
          <TrayCell $w={26}>{line("M.6 5v4h2.800L7 12.500v-11L3.400 5zM9 5q1.500 2 0 4M11.300 3.300q2.700 3.700 0 7.400M13.500 1.500q4 5.500 0 11", 17, 14, 1.1, "#111")}</TrayCell>
          <Clock>
            <T>4:08 PM</T>
            <T>4/12/2023</T>
          </Clock>
          <TrayCell $w={44} $left={8}>
            <svg width="26" height="26" viewBox="0 0 26 26">
              <path d="M0 3h16v12H7l-3 3v-3H0z" fill="#000" />
              <path d="M3 6h10M3 9h10M3 12h5" stroke="#fff" strokeWidth="1" />
              <circle cx="15.500" cy="18" r="7.500" fill="#d0d0d0" stroke="#777" />
              <path d="M16.500 22v-8L12.500 19.500h6" fill="none" stroke="#000" strokeWidth="1.500" />
            </svg>
          </TrayCell>
          <ShowDesktop />
        </Tray>
      </Taskbar>

      <Toast>
        <ToastHead>
          <svg width="16" height="16" viewBox="0 0 16 16">
            <rect width="16" height="16" fill="#444" />
            <path d="M4 3h7v10l-5 1H4z" fill="#ffd873" />
            <path d="M7.500 13a2 2 0 0 1 .5-3.500 3 3 0 0 1 5 .5 1.800 1.800 0 0 1 .5 3z" fill="#1b86dd" />
          </svg>
          <T>OneDrive</T>
          {line("M0 0l9 9M9 0L0 9", 9, 9, 1, "#444")}
        </ToastHead>
        <ToastBody>
          <ToastArt>
            <Cloud w={55} />
          </ToastArt>
          <ToastText>
            <strong>
              <T>Screenshot saved</T>
            </strong>
            <T>The screenshot was added to your</T>
            <T>OneDrive.</T>
          </ToastText>
        </ToastBody>
      </Toast>
    </Screen>
  );
}
